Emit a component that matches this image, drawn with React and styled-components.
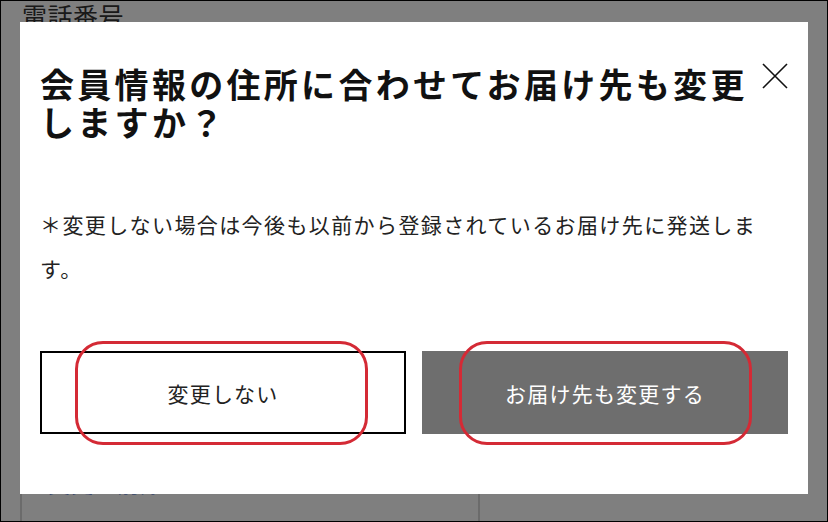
import React from "react";
import styled, { createGlobalStyle } from "styled-components";

const Global = createGlobalStyle`
  html, body { margin: 0; padding: 0; background: #fff; }
  body { font-family: "Noto Sans CJK JP", "Noto Sans", sans-serif; }
  * { box-sizing: border-box; }
`;

const Frame = styled.div`
  position: relative;
  width: 828px;
  height: 522px;
  border: 1px solid #000;
  overflow: hidden;
  background: #fff;
  display: flex;
  flex-direction: column;
`;

const FieldLabel = styled.div`
  margin: -2px 0 0 21px;
  font-size: 25px;
  line-height: 32px;
  color: #333;
  letter-spacing: 0.5px;
`;

const AddressBox = styled.div`
  margin: auto 0 0 19px;
  height: 64px;
  display: grid;
  grid-template-columns: 458px 1fr;
  border-left: 2px solid #d6d6d6;
`;

const AddressCell = styled.div`
  border-right: ${(p) => (p.$divider ? "2px solid #d6d6d6" : "none")};
  padding: 12px 0 0 26px;
`;

const EditLink = styled.span`
  font-size: 22px;
  line-height: 26px;
  color: #2a5ac8;
  letter-spacing: 1px;
`;

const Overlay = styled.div`
  position: absolute;
  inset: 0;
  background: rgba(0, 0, 0, 0.5);
`;

const Modal = styled.div`
  position: absolute;
  left: 19px;
  top: 21px;
  width: 788px;
  height: 472px;
  background: #fff;
  padding: 43px 20px 60px 20px;
  display: flex;
  flex-direction: column;
`;

const Title = styled.h2`
  margin: 0;
  padding-right: 36px;
  font-size: 34px;
  line-height: 38px;
  font-weight: 700;
  letter-spacing: 3.3px;
  color: #111;
`;

const CloseButton = styled.button`
  position: absolute;
  top: 40px;
  right: 19px;
  width: 28px;
  height: 28px;
  padding: 0;
  border: none;
  background: transparent;
  cursor: pointer;
  display: flex;
  align-items: center;
  justify-content: center;
`;

const Note = styled.p`
  margin: 61px 0 0;
  font-size: 21px;
  line-height: 44px;
  font-weight: 400;
  letter-spacing: 1.4px;
  color: #222;
`;

const Actions = styled.div`
  margin-top: 61px;
  display: grid;
  grid-template-columns: 1fr 1fr;
  gap: 16px;
`;

const ActionButton = styled.button`
  position: relative;
  height: 83px;
  font-family: inherit;
  font-size: 21px;
  font-weight: 400;
  letter-spacing: 1.2px;
  border: 2px solid ${(p) => (p.$primary ? "#6e6e6e" : "#000")};
  background: ${(p) => (p.$primary ? "#6e6e6e" : "#fff")};
  color: ${(p) => (p.$primary ? "#fff" : "#222")};
  cursor: pointer;
`;

const Highlight = styled.span`
  position: absolute;
  left: ${(p) => p.$left}px;
  top: -12px;
  width: 293px;
  height: 104px;
  border: 3px solid #d42a35;
  border-radius: 28px;
  pointer-events: none;
`;

export default function App() {
  return (
    <>
      <Global />
      <Frame>
        <FieldLabel>電話番号</FieldLabel>
        <AddressBox>
          <AddressCell $divider>
            <EditLink>変更・削除</EditLink>
          </AddressCell>
          <AddressCell />
        </AddressBox>
        <Overlay />
        <Modal>
          <Title>会員情報の住所に合わせてお届け先も変更しますか？</Title>
          <CloseButton aria-label="閉じる">
            <svg width="26" height="26" viewBox="0 0 26 26">
              <path d="M1 1 L25 25 M25 1 L1 25" stroke="#111" strokeWidth="1.6" fill="none" />
            </svg>
          </CloseButton>
          <Note>＊変更しない場合は今後も以前から登録されているお届け先に発送します。</Note>
          <Actions>
            <ActionButton>
              変更しない
              <Highlight $left={33} />
            </ActionButton>
            <ActionButton $primary>
              お届け先も変更する
              <Highlight $left={35} />
            </ActionButton>
          </Actions>
        </Modal>
      </Frame>
    </>
  );
}
